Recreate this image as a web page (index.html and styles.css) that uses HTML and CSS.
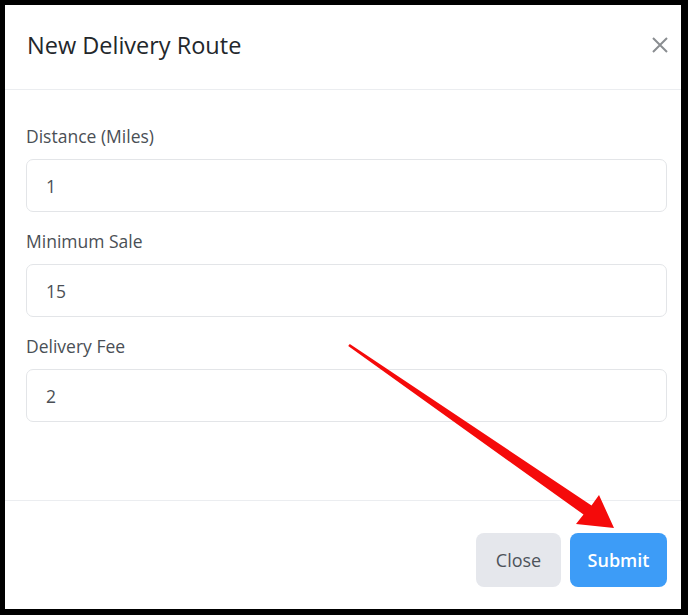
FILE: index.html
```html
<!DOCTYPE html>
<html lang="en">
<head>
  <meta charset="UTF-8">
  <meta name="viewport" content="width=device-width, initial-scale=1.0">
  <title>New Delivery Route</title>
  <link rel="stylesheet" href="styles.css">
</head>
<body>
  <div class="modal">
    <div class="modal-header">
      <h1 class="modal-title">New Delivery Route</h1>
      <button class="close-x" type="button" aria-label="Close">
        <svg width="16" height="16" viewBox="0 0 16 16"><path d="M1 1L15 15M15 1L1 15" stroke="#8a8d91" stroke-width="2" fill="none"/></svg>
      </button>
    </div>
    <form class="modal-body">
      <div class="form-group">
        <label for="distance">Distance (Miles)</label>
        <input type="text" id="distance" value="1">
      </div>
      <div class="form-group">
        <label for="minSale">Minimum Sale</label>
        <input type="text" id="minSale" value="15">
      </div>
      <div class="form-group">
        <label for="fee">Delivery Fee</label>
        <input type="text" id="fee" value="2">
      </div>
    </form>
    <div class="modal-footer">
      <button class="btn btn-close" type="button">Close</button>
      <button class="btn btn-submit" type="submit">Submit</button>
    </div>
  </div>

  <!-- annotation arrow drawn over the screenshot -->
  <svg class="arrow" width="688" height="615" viewBox="0 0 688 615">
    <polygon points="349.8,343.9 591.5,505.5 599,495 614,528 576,524 583.5,514.5 348.2,346.1" fill="#f50a0a"/>
  </svg>
</body>
</html>
```

FILE: styles.css
```css
body {
  margin: 0;
  background: #000;
  font-family: "Open Sans", Lato, sans-serif;
}
.modal {
  margin: 5px 7px 6px 5px;
  height: 604px;
  background: #fff;
  display: flex;
  flex-direction: column;
}
.modal-header {
  height: 85px;
  border-bottom: 1px solid #ebedf0;
  display: flex;
  align-items: center;
  justify-content: space-between;
  padding: 0 13px 5px 22px;
  box-sizing: border-box;
}
.modal-title {
  margin: 0;
  font-size: 23.5px;
  font-weight: 400;
  color: #23272b;
}
.close-x {
  background: none;
  border: none;
  padding: 0;
  width: 16px;
  height: 16px;
}
.modal-body {
  flex: 1;
  padding: 34px 14px 0 21px;
}
.form-group {
  margin-bottom: 17px;
}
label {
  display: block;
  font-size: 17.5px;
  line-height: 24px;
  color: #4a4f55;
  margin-bottom: 11px;
}
input {
  display: block;
  width: 100%;
  height: 53px;
  box-sizing: border-box;
  border: 1px solid #e3e5e8;
  border-radius: 7px;
  padding: 0 19px;
  font-family: inherit;
  font-size: 17.5px;
  color: #4a4f55;
}
.modal-footer {
  border-top: 1px solid #ebedf0;
  display: flex;
  justify-content: flex-end;
  gap: 9px;
  padding: 32px 14px 22px 0;
}
.btn {
  height: 54px;
  border: none;
  border-radius: 8px;
  font-family: inherit;
  font-size: 18px;
  cursor: pointer;
}
.btn-close {
  width: 85px;
  background: #e5e7ec;
  color: #4d535a;
}
.btn-submit {
  width: 97px;
  background: #3d9cf7;
  color: #fff;
  font-weight: 600;
}
.arrow {
  position: absolute;
  top: 0;
  left: 0;
  pointer-events: none;
}
```
